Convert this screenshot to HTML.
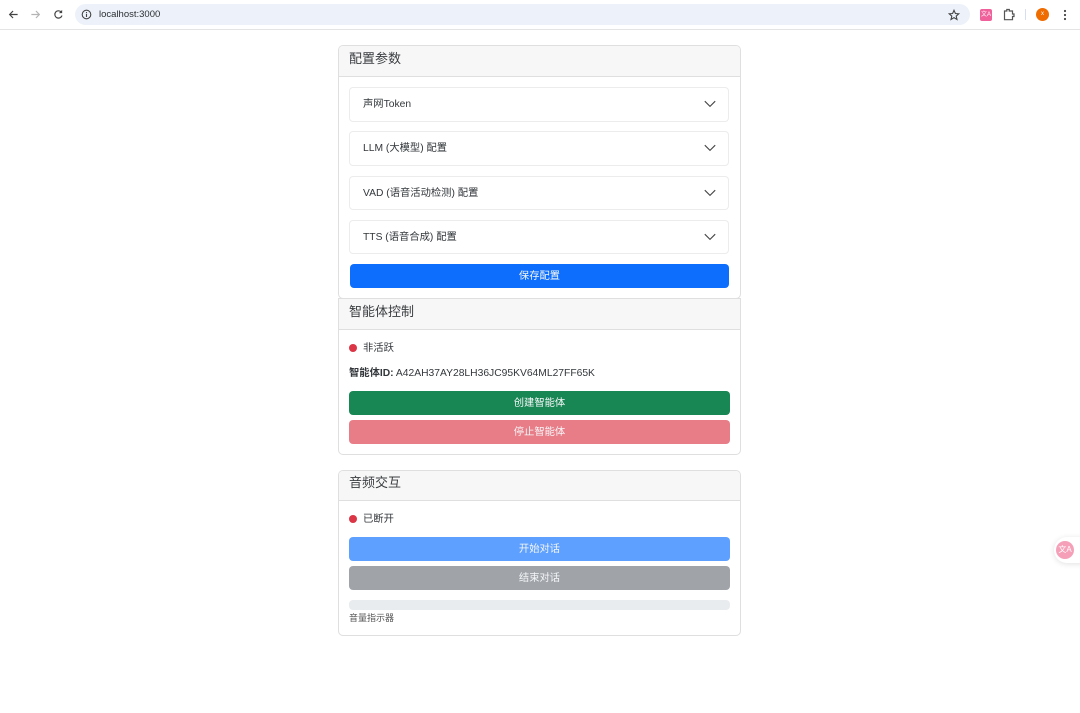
<!DOCTYPE html>
<html><head><meta charset="utf-8">
<style>
html,body{margin:0;padding:0;width:1080px;height:713px;overflow:hidden;background:#fff;font-family:"Liberation Sans","Noto Sans CJK SC",sans-serif;color:#212529}
.a{position:absolute;box-sizing:border-box}
.card{border:1px solid #dfdfdf;border-radius:5px;left:338px;width:403px;background:#fff}
.hd{left:339px;width:401px;background:#f7f7f7;border-bottom:1px solid #dfdfdf;font-size:13px;padding-left:10px;color:#3a3d40}
.acc{left:349px;width:380px;height:35px;border:1px solid #ececec;border-radius:4px;background:#fff;font-size:10.3px;line-height:33px;padding-left:13px;color:#33373b}
.acc svg{position:absolute;left:354px;top:12px}
.btn{left:349px;width:381px;height:24px;border-radius:4px;color:#f4f6f8;text-align:center;font-size:10.3px;line-height:25px}
.dot{width:8px;height:8px;border-radius:50%;background:#dc3545;left:349px}
.t{font-size:10.3px;white-space:nowrap;line-height:14px;color:#33373b}
</style></head><body>
<!-- browser bar -->
<div class="a" style="left:0;top:0;width:1080px;height:30px;background:#fff;border-bottom:1px solid #e4e4e4"></div>
<svg class="a" style="left:8px;top:9px" width="11" height="11" viewBox="0 0 12 12"><path d="M10.500 6H2M5.500 2.200 1.800 6l3.700 3.800" fill="none" stroke="#444" stroke-width="1.300"/></svg>
<svg class="a" style="left:30px;top:9px" width="11" height="11" viewBox="0 0 12 12"><path d="M1.500 6H10M6.500 2.200 10.200 6 6.500 9.800" fill="none" stroke="#b4b4b4" stroke-width="1.300"/></svg>
<svg class="a" style="left:53px;top:9px" width="11" height="11" viewBox="0 0 12 12"><path d="M9.800 7.200A4 4 0 1 1 9 3.300" fill="none" stroke="#444" stroke-width="1.300"/><path d="M10 1v3.500H6.500z" fill="#444"/></svg>
<div class="a" style="left:75px;top:4px;width:895px;height:21px;border-radius:11px;background:#edf2fa"></div>
<svg class="a" style="left:81px;top:9px" width="11" height="11" viewBox="0 0 11 11"><circle cx="5.500" cy="5.500" r="4.300" fill="none" stroke="#444" stroke-width="1.100"/><path d="M5.500 4.800v3.200M5.500 3v1" stroke="#444" stroke-width="1.100"/></svg>
<div class="a" style="left:99px;top:8px;font-size:9.500px;line-height:14px;color:#2c2f33;white-space:nowrap">localhost:3000</div>
<svg class="a" style="left:948px;top:9px" width="12" height="12" viewBox="0 0 12 12"><path d="M6 1.300 7.400 4.500l3.400.3-2.600 2.300.8 3.400L6 8.700l-3 1.800.8-3.400L1.200 4.800l3.400-.3z" fill="none" stroke="#444" stroke-width="1.100"/></svg>
<div class="a" style="left:980px;top:9px;width:12px;height:12px;border-radius:2px;background:#f0609a;color:#fff;font-size:6px;line-height:12px;text-align:center;white-space:nowrap;overflow:hidden">文A</div>
<svg class="a" style="left:1003px;top:8px" width="12" height="13" viewBox="0 0 12 13"><path d="M1.500 3h2.300V1.500h2.500V3h3.200v3h1.500v2.500H9.500v3.200h-8z" fill="none" stroke="#555" stroke-width="1.200"/></svg>
<div class="a" style="left:1025px;top:9px;width:1px;height:11px;background:#d5dfef"></div>
<div class="a" style="left:1036px;top:8px;width:13px;height:13px;border-radius:50%;background:#ef6c00;color:#fff;font-size:6px;line-height:13px;text-align:center">x</div>
<svg class="a" style="left:1062px;top:9px" width="6" height="12" viewBox="0 0 6 12"><circle cx="3" cy="2" r="1.100" fill="#444"/><circle cx="3" cy="6" r="1.100" fill="#444"/><circle cx="3" cy="10" r="1.100" fill="#444"/></svg>

<!-- card 1 -->
<div class="a card" style="top:45px;height:254px"></div>
<div class="a hd" style="top:46px;height:31px;border-radius:4px 4px 0 0;line-height:26px">配置参数</div>
<div class="a acc" style="top:87px">声网Token<svg width="12" height="8" viewBox="0 0 12 8"><path d="M.8 1.200 6 6.400l5.200-5.200" fill="none" stroke="#444" stroke-width="1.100"/></svg></div>
<div class="a acc" style="top:131px">LLM (大模型) 配置<svg width="12" height="8" viewBox="0 0 12 8"><path d="M.8 1.200 6 6.400l5.200-5.200" fill="none" stroke="#444" stroke-width="1.100"/></svg></div>
<div class="a acc" style="top:176px;height:34px">VAD (语音活动检测) 配置<svg width="12" height="8" viewBox="0 0 12 8"><path d="M.8 1.200 6 6.400l5.200-5.200" fill="none" stroke="#444" stroke-width="1.100"/></svg></div>
<div class="a acc" style="top:220px;height:34px">TTS (语音合成) 配置<svg width="12" height="8" viewBox="0 0 12 8"><path d="M.8 1.200 6 6.400l5.200-5.200" fill="none" stroke="#444" stroke-width="1.100"/></svg></div>
<div class="a btn" style="left:350px;top:264px;width:379px;background:#0d6efd">保存配置</div>

<!-- card 2 -->
<div class="a card" style="top:298px;height:157px;border-radius:0 0 5px 5px"></div>
<div class="a hd" style="top:299px;height:31px;line-height:26px">智能体控制</div>
<div class="a dot" style="top:344px"></div>
<div class="a t" style="left:363px;top:342px">非活跃</div>
<div class="a t" style="left:349px;top:367px"><b>智能体ID:</b> <span style="font-size:10.300px">A42AH37AY28LH36JC95KV64ML27FF65K</span></div>
<div class="a btn" style="top:391px;background:#198754">创建智能体</div>
<div class="a btn" style="top:420px;background:#e97d87">停止智能体</div>

<!-- card 3 -->
<div class="a card" style="top:470px;height:166px"></div>
<div class="a hd" style="top:471px;height:30px;border-radius:4px 4px 0 0;line-height:24px">音频交互</div>
<div class="a dot" style="top:515px"></div>
<div class="a t" style="left:363px;top:513px">已断开</div>
<div class="a btn" style="top:537px;background:#5ea0ff">开始对话</div>
<div class="a btn" style="top:566px;background:#a0a4a9">结束对话</div>
<div class="a" style="left:349px;top:600px;width:381px;height:10px;border-radius:4px;background:#e9ecef"></div>
<div class="a" style="left:349px;top:612px;font-size:9px;line-height:12px;color:#555;white-space:nowrap">音量指示器</div>

<!-- floating -->
<div class="a" style="left:1054px;top:537px;width:40px;height:26px;border-radius:13px;background:#fff;box-shadow:0 1px 6px rgba(0,0,0,.12)"></div>
<div class="a" style="left:1056px;top:541px;width:18px;height:18px;border-radius:50%;background:#f5a0b8;color:#fff;font-size:8px;line-height:18px;text-align:center;white-space:nowrap">文A</div>
</body></html>
